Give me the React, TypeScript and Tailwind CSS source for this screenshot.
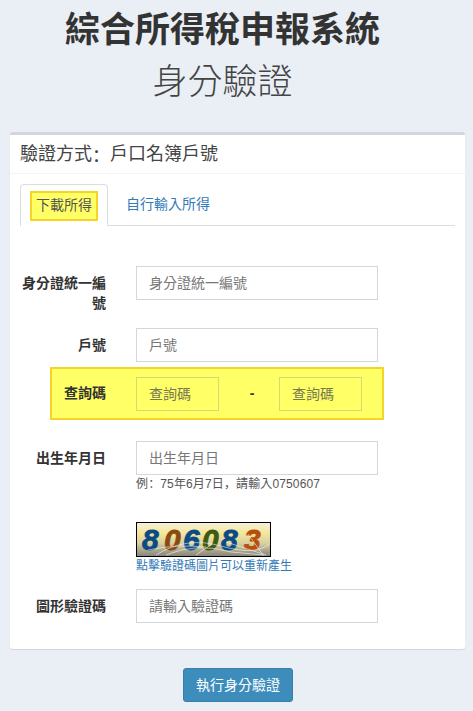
const font = { fontFamily: '"Liberation Sans", "Noto Sans CJK TC", sans-serif' };

function Field({ label, placeholder, hint }: { label: string; placeholder: string; hint?: React.ReactNode }) {
  return (
    <div className="ml-[10px] flex gap-[30px]">
      <label className="w-[86px] shrink-0 pt-[7px] text-right text-[14px] leading-[20px] font-bold text-[#333]">{label}</label>
      <div className="w-[242px]">
        <input
          readOnly
          placeholder={placeholder}
          className="block h-[34px] w-full border border-[#d2d6de] bg-white px-3 text-[14px] text-[#333] placeholder:text-[#777] outline-none"
        />
        {hint && <p className="-mt-[1px] text-[12px] leading-[17px] tracking-[0.13px] whitespace-nowrap text-[#555]">{hint}</p>}
      </div>
    </div>
  );
}

function Captcha() {
  const digits: [string, string, number][] = [
    ['8', '#0b4a85', 6],
    ['0', '#8a4a10', 28],
    ['6', '#0b4a85', 47],
    ['0', '#3f5a10', 66],
    ['8', '#0b4a85', 85],
    ['3', '#b5500f', 108],
  ];
  return (
    <svg width="135" height="35" viewBox="0 0 135 35" className="block">
      <defs>
        <linearGradient id="cap" x1="0" y1="0" x2="0" y2="1">
          <stop offset="0" stopColor="#f4f1e2" />
          <stop offset="0.3" stopColor="#f6e79a" />
          <stop offset="0.6" stopColor="#d9d2a0" />
          <stop offset="1" stopColor="#85827c" />
        </linearGradient>
      </defs>
      <rect x="0.5" y="0.5" width="134" height="34" fill="url(#cap)" stroke="#000" />
      {digits.map(([d, c, x], i) => (
        <text key={i} x={x} y="28" fill={c} stroke={c} strokeWidth="0.8" fontSize="30" fontWeight="700" fontStyle="italic" fontFamily="'Liberation Sans', sans-serif">
          {d}
        </text>
      ))}
      <g stroke="#fff" strokeWidth="0.6" fill="none" opacity="0.9">
        <path d="M20 33Q50 14 85 24T133 22" />
        <path d="M30 33Q60 20 95 30L128 33" />
        <path d="M12 28Q40 22 70 25M90 20L130 33M112 12L127 33M60 33L76 22" />
      </g>
    </svg>
  );
}

export default function App() {
  return (
    <div style={font} className="h-[711px] w-[473px] overflow-hidden bg-[#eaeef5] text-[#333]">
      <h1 className="mt-[5px] w-[445px] text-center text-[35px] leading-[50px] font-bold text-[#333]">綜合所得稅申報系統</h1>
      <h2 className="mt-[2px] w-[445px] text-center text-[35px] leading-[50px] font-light text-[#444]">身分驗證</h2>

      <section className="mt-[25px] ml-[10px] h-[517px] w-[455px] rounded-[3px] border-t-[3px] border-[#d2d6de] bg-white shadow-[0_1px_1px_rgba(0,0,0,0.1)]">
        <header className="flex h-[39px] items-center border-b border-[#f4f4f4] pl-[10px] text-[18px] text-[#444]">
          驗證方式<span className="font-['Noto_Sans_CJK_SC']">：</span>戶口名簿戶號
        </header>

        <div className="mx-[10px] mt-[10px] flex h-[42px] border-b border-[#ddd] text-[14px]">
          <div className="-mb-px flex h-[42px] w-[88px] items-center justify-center rounded-t-[4px] border border-b-0 border-[#ddd] bg-white">
            <span className="flex h-[30px] w-[68px] items-center justify-center border-2 border-[#f5d327] bg-[#ffff66] text-[#555]">下載所得</span>
          </div>
          <div className="flex h-[41px] items-center pl-[18px] text-[#337ab7]">自行輸入所得</div>
        </div>

        <div className="mt-[40px]">
          <Field label="身分證統一編號" placeholder="身分證統一編號" />
        </div>
        <div className="mt-[15px]">
          <Field label="戶號" placeholder="戶號" />
        </div>

        <div className="mt-[5px] ml-[40px] flex h-[53px] w-[334px] items-center border-2 border-[#f5d327] bg-[#ffff66]">
          <label className="w-[54px] shrink-0 text-right text-[14px] font-bold text-[#333]">查詢碼</label>
          <input readOnly placeholder="查詢碼" className="ml-[30px] h-[34px] w-[83px] border border-[#d8d870] bg-transparent px-3 text-[14px] placeholder:text-[#777755] outline-none" />
          <span className="w-[60px] pl-[6px] text-center text-[14px] font-bold text-[#333]">-</span>
          <input readOnly placeholder="查詢碼" className="h-[34px] w-[83px] border border-[#d8d870] bg-transparent px-3 text-[14px] placeholder:text-[#777755] outline-none" />
        </div>

        <div className="mt-[21px]">
          <Field
            label="出生年月日"
            placeholder="出生年月日"
            hint={
              <>
                例<span className="font-['Noto_Sans_CJK_SC']">：</span>75年6月7日<span className="font-['Noto_Sans_CJK_SC']">，</span>請輸入0750607
              </>
            }
          />
        </div>

        <div className="mt-[29px] ml-[126px]">
          <Captcha />
          <a className="mt-[1px] block text-[12px] leading-[17px] text-[#337ab7]">點擊驗證碼圖片可以重新產生</a>
        </div>

        <div className="mt-[14px]">
          <Field label="圖形驗證碼" placeholder="請輸入驗證碼" />
        </div>
      </section>

      <div className="mt-[19px] flex justify-center pl-[3px]">
        <button className="h-[34px] w-[110px] rounded-[3px] border border-[#367fa9] bg-[#3c8dbc] text-[14px] text-white">執行身分驗證</button>
      </div>
    </div>
  );
}
